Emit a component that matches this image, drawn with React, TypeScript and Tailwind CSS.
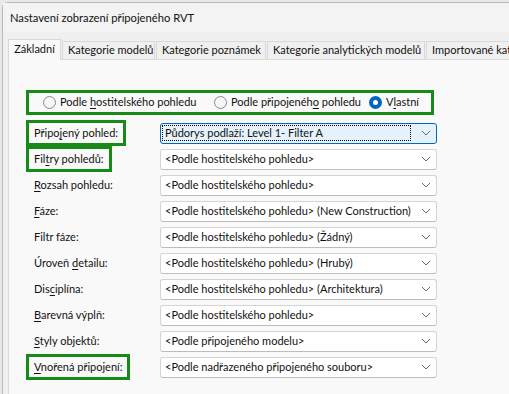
import React from 'react';

const green = 'border-[3px] border-[#178a17]';

const Chevron = () => (
  <svg width="10" height="6" viewBox="0 0 10 6" className="shrink-0">
    <path d="M1 1 L5 5 L9 1" fill="none" stroke="#6b6b6b" strokeWidth="1" />
  </svg>
);

const Radio = ({ checked = false }: { checked?: boolean }) =>
  checked ? (
    <span className="w-[13px] h-[13px] rounded-full bg-[#0067c0] flex items-center justify-center shrink-0">
      <span className="w-[5px] h-[5px] rounded-full bg-white" />
    </span>
  ) : (
    <span className="w-[13px] h-[13px] rounded-full border border-[#8a8a8a] bg-[#f6f6f6] shrink-0" />
  );

// popisek s podtrženou přístupovou klávesou
const L = ({ pre, u = '', post = '' }: { pre: string; u?: string; post?: string }) => (
  <span className="whitespace-nowrap">
    {pre}
    {u && <span className="underline underline-offset-2">{u}</span>}
    {post}
  </span>
);

const rows: { label: React.ReactNode; value: string; box?: string }[] = [
  { label: <L pre="Připo" u="j" post="ený pohled:" />, value: 'Půdorys podlaží: Level 1- Filter A', box: 'w-[100px]' },
  { label: <L pre="Fil" u="t" post="ry pohledů:" />, value: '<Podle hostitelského pohledu>', box: 'w-[86px]' },
  { label: <L pre="" u="R" post="ozsah pohledu:" />, value: '<Podle hostitelského pohledu>' },
  { label: <L pre="" u="F" post="áze:" />, value: '<Podle hostitelského pohledu> (New Construction)' },
  { label: <L pre="Filtr fáze:" />, value: '<Podle hostitelského pohledu> (Žádný)' },
  { label: <L pre="Úroveň " u="d" post="etailu:" />, value: '<Podle hostitelského pohledu> (Hrubý)' },
  { label: <L pre="Dis" u="c" post="iplína:" />, value: '<Podle hostitelského pohledu> (Architektura)' },
  { label: <L pre="" u="B" post="arevná výplň:" />, value: '<Podle hostitelského pohledu>' },
  { label: <L pre="" u="S" post="tyly objektů:" />, value: '<Podle připojeného modelu>' },
  { label: <L pre="" u="V" post="nořená připojení:" />, value: '<Podle nadřazeného připojeného souboru>', box: 'w-[104px]' },
];

const tabs = [
  { t: 'Kategorie modelů', w: 'w-[93px]' },
  { t: 'Kategorie poznámek', w: 'w-[110px]' },
  { t: 'Kategorie analytických modelů', w: 'w-[158px]' },
  { t: 'Importované kategorie', w: 'w-[120px]' },
];

const App = () => {
  return (
    <div
      className="w-[509px] h-[394px] overflow-hidden bg-[#e8e8e8] text-[11px] text-[#111]"
      style={{ fontFamily: 'Lato, "Noto Sans", sans-serif' }}
    >
      <div className="w-[520px] h-[400px] ml-[2px] mt-[2px] rounded-tl-[6px] border-l border-t border-[#b9b9b9] bg-[#f0f0f0] flex flex-col">
        {/* titulek */}
        <div className="h-[29px] bg-[#f3f3f3] flex items-center pl-[7px] pt-[2px] text-[11.2px]">
          Nastavení zobrazení připojeného RVT
        </div>
        {/* záložky */}
        <div className="h-[27px] pl-[5px] pt-[6px] flex items-end">
          <div className="h-[21px] w-[53px] shrink-0 bg-[#f9f9f9] border border-b-0 border-[#d9d9d9] flex items-center justify-center pb-[2px] -mb-px relative z-10">
            Základní
          </div>
          {tabs.map((t) => (
            <div
              key={t.t}
              className={`${t.w} h-[18px] pl-[5px] bg-[#f0f0f0] border border-b-0 border-[#d9d9d9] ml-[1px] flex items-center whitespace-nowrap overflow-hidden shrink-0`}
            >
              {t.t}
            </div>
          ))}
        </div>
        {/* obsah */}
        <div className="flex-1 ml-[5px] bg-[#f9f9f9] border-l border-t border-[#d9d9d9] pt-[30px] pl-[17px]">
          <div className={`${green} w-[408px] h-[25px] flex items-center pl-[14px]`}>
            <label className="w-[171px] flex items-center gap-[4px] shrink-0">
              <Radio />
              <L pre="Podle " u="h" post="ostitelského pohledu" />
            </label>
            <label className="w-[155px] flex items-center gap-[4px] shrink-0">
              <Radio />
              <L pre="Podle připojenéh" u="o" post=" pohledu" />
            </label>
            <label className="flex items-center gap-[4px]">
              <Radio checked />
              <L pre="V" u="l" post="astní" />
            </label>
          </div>
          <div className="flex flex-col mt-[5px]">
            {rows.map((r, i) => (
              <div key={i} className="h-[26px] flex items-center">
                <div className="w-[134px] h-full flex items-center shrink-0">
                  {r.box ? (
                    <div className={`${green} ${r.box} h-full flex items-center pl-[5px]`}>{r.label}</div>
                  ) : (
                    <div className="pl-[8px]">{r.label}</div>
                  )}
                </div>
                {i === 0 ? (
                  <div className="w-[277px] h-[21px] rounded-[3px] border border-[#0067c0] bg-[#e5f1fb] flex items-center pl-[1px] pr-[5px]">
                    <div className="flex-1 h-[16px] border border-dotted border-black flex items-center pl-[2px] mr-[10px]">
                      {r.value}
                    </div>
                    <Chevron />
                  </div>
                ) : (
                  <div className="w-[277px] h-[21px] rounded-[3px] border border-[#d4d4d4] border-b-[#bdbdbd] bg-white flex items-center pl-[4px] pr-[5px] justify-between">
                    <span className="whitespace-nowrap">{r.value}</span>
                    <Chevron />
                  </div>
                )}
              </div>
            ))}
          </div>
        </div>
      </div>
    </div>
  );
};

export default App;
